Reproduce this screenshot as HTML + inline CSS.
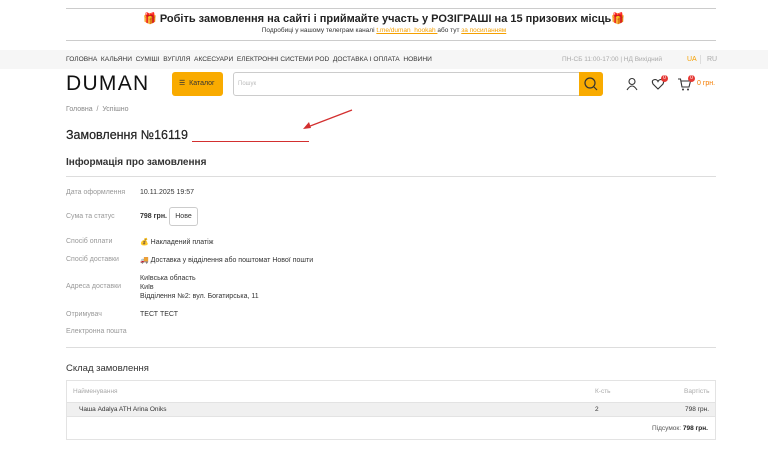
<!DOCTYPE html>
<html><head><meta charset="utf-8"><style>
*{margin:0;padding:0;box-sizing:border-box}
body{width:768px;height:453px;overflow:hidden;background:#fff;font-family:"Liberation Sans","DejaVu Sans",sans-serif;color:#222;position:relative}
.a{position:absolute;white-space:nowrap}
.lbl{font-size:7px;color:#999}
.val{font-size:7px;color:#333}
</style></head><body>
<div class="a" style="left:66px;top:8px;width:650px;border-top:1px solid #ccc"></div>
<div class="a" style="left:66px;top:40px;width:650px;border-top:1px solid #ccc"></div>
<div class="a" style="left:0;top:12px;width:768px;text-align:center;font-size:11px;font-weight:bold;color:#222">🎁 Робіть замовлення на сайті і приймайте участь у РОЗІГРАШІ на 15 призових місць🎁</div>
<div class="a" style="left:0;top:27px;width:768px;text-align:center;font-size:6.5px;color:#333">Подробиці у нашому телеграм каналі <span style="color:#f5a000;text-decoration:underline">t.me/duman_hookah </span> або тут <span style="color:#f5a000;text-decoration:underline">за посиланням</span></div>
<div class="a" style="left:0;top:50px;width:768px;height:19px;background:#f6f6f6"></div>
<div class="a" style="left:66px;top:56px;font-size:6.6px;color:#333">ГОЛОВНА &nbsp;КАЛЬЯНИ &nbsp;СУМІШІ &nbsp;ВУГІЛЛЯ &nbsp;АКСЕСУАРИ &nbsp;ЕЛЕКТРОННІ СИСТЕМИ POD &nbsp;ДОСТАВКА І ОПЛАТА &nbsp;НОВИНИ</div>
<div class="a" style="left:562px;top:56px;font-size:6.5px;color:#aaa">ПН-СБ 11:00-17:00 | НД Вихідний</div>
<div class="a" style="left:687px;top:56px;font-size:7px;color:#f5a000">UA</div>
<div class="a" style="left:700px;top:55px;height:9px;border-left:1px solid #ddd"></div>
<div class="a" style="left:707px;top:56px;font-size:7px;color:#aaa">RU</div>
<div class="a" style="left:66px;top:72px;font-size:21px;letter-spacing:1.3px;color:#111">DUMAN</div>
<div class="a" style="left:172px;top:72px;width:51px;height:24px;background:#f9ab00;border-radius:3px;font-size:7px;color:#333;line-height:24px;padding-left:7px">☰ &nbsp;Каталог</div>
<div class="a" style="left:233px;top:72px;width:370px;height:24px;border:1px solid #ccc;border-radius:3px;font-size:6px;color:#bbb;line-height:22px;padding-left:4px">Пошук</div>
<div class="a" style="left:579px;top:72px;width:24px;height:24px;background:#f9ab00;border-radius:0 3px 3px 0"><svg width="24" height="24"><circle cx="11" cy="11" r="5" fill="none" stroke="#333" stroke-width="1.2"/><line x1="15" y1="15" x2="18" y2="18" stroke="#333" stroke-width="1.2"/></svg></div>
<svg class="a" style="left:625px;top:77px" width="14" height="14"><circle cx="7" cy="4.5" r="3" fill="none" stroke="#333" stroke-width="1.1"/><path d="M2 13 Q7 5 12 13" fill="none" stroke="#333" stroke-width="1.1"/></svg>
<svg class="a" style="left:651px;top:77px" width="14" height="14"><path d="M7 12 L2 7 Q0 3 4 2.5 Q6 2.5 7 4.5 Q8 2.5 10 2.5 Q14 3 12 7 Z" fill="none" stroke="#333" stroke-width="1.1"/></svg>
<div class="a" style="left:661px;top:75px;width:7px;height:7px;border-radius:50%;background:#e53935;color:#fff;font-size:5px;text-align:center;line-height:7px">0</div>
<svg class="a" style="left:677px;top:77px" width="15" height="14"><path d="M1 2 H3.5 L5 10 H12 L13.5 4 H4" fill="none" stroke="#333" stroke-width="1.1"/><circle cx="6" cy="12.5" r="1" fill="#333"/><circle cx="11" cy="12.5" r="1" fill="#333"/></svg>
<div class="a" style="left:688px;top:75px;width:7px;height:7px;border-radius:50%;background:#e53935;color:#fff;font-size:5px;text-align:center;line-height:7px">0</div>
<div class="a" style="left:697px;top:80px;font-size:7px;color:#f57c00">0 грн.</div>
<div class="a" style="left:66px;top:106px;font-size:7px;color:#888">Головна &nbsp;/ &nbsp;Успішно</div>
<div class="a" style="left:66px;top:128px;font-size:12.5px;color:#222;-webkit-text-stroke:0.2px #222">Замовлення №16119</div>
<div class="a" style="left:192px;top:141px;width:117px;border-top:1.5px solid #d32f2f"></div>
<svg class="a" style="left:300px;top:108px" width="55" height="25"><line x1="52" y1="2" x2="5" y2="20" stroke="#d32f2f" stroke-width="1.3"/><path d="M3 21 L9 14 L11 20 Z" fill="#d32f2f"/></svg>
<div class="a" style="left:66px;top:157px;font-size:10px;font-weight:bold;color:#333">Інформація про замовлення</div>
<div class="a" style="left:66px;top:176px;width:650px;border-top:1px solid #ddd"></div>
<div class="a lbl" style="left:66px;top:189px">Дата оформлення</div><div class="a val" style="left:140px;top:189px">10.11.2025 19:57</div>
<div class="a lbl" style="left:66px;top:213px">Сума та статус</div><div class="a val" style="left:140px;top:213px;font-weight:bold">798 грн.</div>
<div class="a" style="left:169px;top:207px;width:29px;height:19px;border:1px solid #ccc;border-radius:3px;font-size:7px;text-align:center;line-height:17px;color:#333">Нове</div>
<div class="a lbl" style="left:66px;top:238px">Спосіб оплати</div><div class="a val" style="left:140px;top:238px">💰 Накладений платіж</div>
<div class="a lbl" style="left:66px;top:256px">Спосіб доставки</div><div class="a val" style="left:140px;top:256px">🚚 Доставка у відділення або поштомат Нової пошти</div>
<div class="a lbl" style="left:66px;top:283px">Адреса доставки</div>
<div class="a val" style="left:140px;top:274px;line-height:9px">Київська область<br>Київ<br>Відділення №2: вул. Богатирська, 11</div>
<div class="a lbl" style="left:66px;top:311px">Отримувач</div><div class="a val" style="left:140px;top:311px">ТЕСТ ТЕСТ</div>
<div class="a lbl" style="left:66px;top:328px">Електронна пошта</div>
<div class="a" style="left:66px;top:347px;width:650px;border-top:1px solid #ddd"></div>
<div class="a" style="left:66px;top:363px;font-size:9.5px;color:#333">Склад замовлення</div>
<div class="a" style="left:66px;top:380px;width:650px;height:60px;border:1px solid #e3e3e3"></div>
<div class="a" style="left:73px;top:388px;font-size:6.5px;color:#aaa">Найменування</div>
<div class="a" style="left:595px;top:388px;font-size:6.5px;color:#aaa">К-сть</div>
<div class="a" style="left:684px;top:388px;font-size:6.5px;color:#aaa">Вартість</div>
<div class="a" style="left:67px;top:402px;width:648px;height:15px;background:#f0f0f0;border-top:1px solid #e3e3e3;border-bottom:1px solid #e3e3e3"></div>
<div class="a" style="left:79px;top:406px;font-size:6.5px;color:#333">Чаша Adalya ATH Arina Oniks</div>
<div class="a" style="left:595px;top:406px;font-size:6.5px;color:#333">2</div>
<div class="a" style="left:685px;top:406px;font-size:6.5px;color:#333">798 грн.</div>
<div class="a" style="left:652px;top:425px;font-size:6.5px;color:#555">Підсумок: <b style="color:#222">798 грн.</b></div>
</body></html>
